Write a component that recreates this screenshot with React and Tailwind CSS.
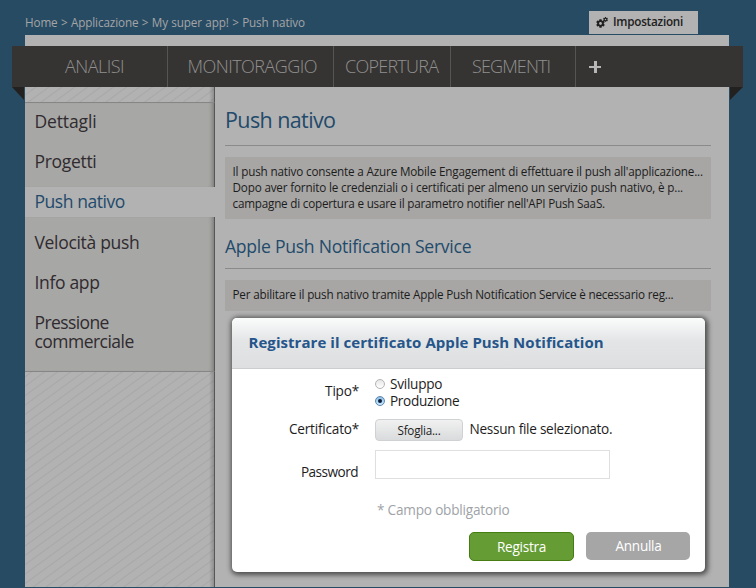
import { FaCog } from 'react-icons/fa';

const tabs = [
  { label: 'ANALISI', box: 'w-[156px] pl-[53px]', track: 'tracking-[-0.53px]' },
  { label: 'MONITORAGGIO', box: 'w-[166px] pl-[19.5px]', track: 'tracking-[-0.54px]' },
  { label: 'COPERTURA', box: 'w-[117px] pl-[11px]', track: 'tracking-[-0.75px]' },
  { label: 'SEGMENTI', box: 'w-[125px] pl-[21px]', track: 'tracking-[-0.87px]' },
];

function Note({ children, className }) {
  return (
    <div className={`bg-[#a7a6a4] pl-[7.5px] text-[11.7px] leading-4 text-[#1c1c1c] whitespace-nowrap ${className}`}>
      {children}
    </div>
  );
}

function Sidebar() {
  return (
    <aside className="relative w-[190px] h-[500px] border-r border-[#565656] bg-[#b2b2b2] bg-[repeating-linear-gradient(144deg,transparent_0px,transparent_5.4px,#a9a9a9_6.4px,#a9a9a9_6.6px,transparent_7.6px)]">
      <div className="absolute right-0 top-0 h-full w-[5px] bg-linear-to-r from-transparent to-black/20" />
      <nav className="relative mt-[15px] -mr-px text-[17.5px] leading-[19px] text-[#302b2f]">
        <div className="flex flex-col gap-[21px] h-[85px] pt-[9px] pl-[9.5px] border-t border-[#868686] border-r border-r-[#565656] bg-[#a7a7a5] shadow-[inset_-5px_0_5px_-4px_#00000055]">
          <span className="tracking-[-0.14px]">Dettagli</span>
          <span className="tracking-[-0.31px]">Progetti</span>
        </div>
        <div className="h-[30px] pt-[5px] pl-[9.5px] bg-[#b2b2b2] text-[#224a6b] tracking-[-0.45px]">Push nativo</div>
        <div className="flex flex-col gap-[21px] h-[155px] pt-[16px] pl-[9.5px] border-b border-[#868686] border-r border-r-[#565656] bg-[#a7a7a5] shadow-[inset_-5px_0_5px_-4px_#00000055]">
          <span className="tracking-[-0.32px]">Velocità push</span>
          <span className="tracking-[-0.33px]">Info app</span>
          <span>
            <span className="tracking-[-0.6px]">Pressione</span>
            <br />
            <span className="tracking-[-0.53px]">commerciale</span>
          </span>
        </div>
      </nav>
    </aside>
  );
}

function Radio({ checked }) {
  return (
    <span
      className={`mt-px flex size-[10px] items-center justify-center rounded-full border ${
        checked ? 'border-[#5f86ad] bg-linear-to-b from-[#8dbce6] to-[#c9ecff]' : 'border-[#b4b4b4] bg-linear-to-b from-[#e6e6e6] to-white'
      }`}
    >
      {checked && <span className="size-1 rounded-full bg-[#0b1e38]" />}
    </span>
  );
}

function Modal() {
  return (
    <div className="absolute left-[232px] top-[318px] w-[473px] h-[254px] rounded-[5px] bg-white shadow-[1px_1px_5px_2px_#00000090] text-[13.6px] text-[#1d1d1d] whitespace-nowrap">
      <h2 className="h-[51px] rounded-t-[5px] border-b border-[#cccdce] bg-linear-to-b from-[#fbfcfc] via-[#e3e5e6] via-45% to-[#dedfe1] pl-[16.5px] pt-[14px] text-[15px] leading-5 font-bold text-[#25558a] tracking-[0.05px]">
        Registrare il certificato Apple Push Notification
      </h2>
      <div className="flex h-[43px] pt-[6px]">
        <div className="w-[127px] pt-[7px] text-right leading-[18px] tracking-[-0.2px]">Tipo*</div>
        <div className="ml-4 flex flex-col">
          <label className="flex h-[17px] items-center gap-[5px] tracking-[-0.26px] leading-[17px]">
            <Radio />
            <span className="-mt-px">Sviluppo</span>
          </label>
          <label className="flex h-[17px] items-center gap-[5px] tracking-[-0.31px] leading-[17px]">
            <Radio checked />
            <span className="-mt-px">Produzione</span>
          </label>
        </div>
      </div>
      <div className="flex h-[38px] pt-[7px]">
        <div className="w-[127px] text-right leading-[20px] tracking-[-0.22px]">Certificato*</div>
        <button className="ml-4 h-[22px] w-[88px] rounded-[4px] border border-[#cfd1d2] bg-linear-to-b from-[#f1f1f1] to-[#d9dbdc] text-[11.7px] leading-[19px] tracking-[-0.23px]">
          Sfoglia...
        </button>
        <span className="ml-[6.5px] leading-[20px] tracking-[-0.27px]">Nessun file selezionato.</span>
      </div>
      <div className="flex h-[50px]">
        <div className="w-[126px] pt-[13px] text-right leading-[18px] tracking-[-0.52px]">Password</div>
        <div className="ml-[17px] h-[29px] w-[235px] border border-[#dfdfdf] bg-white" />
      </div>
      <div className="pl-[145px] leading-5 text-[#a0a3a7] tracking-[-0.2px]">* Campo obbligatorio</div>
      <div className="mt-[12px] flex gap-3 pl-[237px] text-white">
        <button className="h-[29px] w-[105px] rounded-[5px] border border-[#467d13] bg-[#659c33] leading-[26px] tracking-[-0.27px]">Registra</button>
        <button className="h-[28px] w-[104px] rounded-[5px] bg-[#a6a6a6] pl-px leading-[28px] tracking-[-0.27px]">Annulla</button>
      </div>
    </div>
  );
}

export default function App() {
  return (
    <div className="relative h-[588px] w-[756px] overflow-hidden bg-[#284b64] font-['Open_Sans','Noto_Sans',sans-serif]">
      <header className="flex h-[35px] pl-[25px] pt-[11px]">
        <div className="w-[564px] pt-[3px] text-[11.7px] leading-4 text-[#a3a5a6] tracking-[-0.12px] [word-spacing:0.5px]">
          Home &gt; Applicazione &gt; My super app! &gt; Push nativo
        </div>
        <div className="flex h-[23px] w-[109px] bg-[#b2b2b2] pl-[7px] text-[#202020]">
          <div className="relative w-[17px]">
            <FaCog className="absolute left-0 top-[8px] size-[9px]" />
            <FaCog className="absolute left-[7px] top-[6px] size-[5px]" />
          </div>
          <span className="pt-[2px] text-[11.7px] leading-4 font-semibold tracking-[-0.24px]">Impostazioni</span>
        </div>
      </header>
      <div className="ml-[25px] h-[11px] w-[704px] bg-[#b2b2b2]" />
      <nav className="ml-[12px] flex h-[41px] w-[731px] bg-[#363432] text-[18px] font-light leading-[41px] text-[#909090]">
        {tabs.map((t) => (
          <div key={t.label} className={`border-r border-[#575553] ${t.box} ${t.track}`}>
            {t.label}
          </div>
        ))}
        <div className="flex items-center pl-[13px]">
          <svg width="12" height="12" viewBox="0 0 12 12" fill="#b6b6b6">
            <path d="M5 0h3v5h4v2H8v5H5V7H0V5h5z" />
          </svg>
        </div>
      </nav>
      <div className="flex">
        <svg className="ml-[12px]" width="13" height="13" viewBox="0 0 13 13">
          <path d="M0 0h12v13z" fill="#23211f" />
        </svg>
        <div className="flex h-[500px] w-[704px] bg-[#b2b2b2]">
          <Sidebar />
          <main className="w-[496px] pl-[10px]">
            <h1 className="h-[59px] border-b border-[#8a8a8a] pt-[19px] text-[21.5px] leading-[28px] text-[#224a6b] tracking-[-0.6px]">Push nativo</h1>
            <Note className="mt-[11px] h-[62px] pt-[6px]">
              <div className="tracking-[-0.17px]">Il push nativo consente a Azure Mobile Engagement di effettuare il push all'applicazione...</div>
              <div className="tracking-[-0.17px]">Dopo aver fornito le credenziali o i certificati per almeno un servizio push nativo, è p...</div>
              <div className="tracking-[-0.21px]">campagne di copertura e usare il parametro notifier nell'API Push SaaS.</div>
            </Note>
            <h2 className="h-[50px] border-b border-[#8a8a8a] pt-[15px] text-[17.6px] leading-[25px] text-[#224a6b] tracking-[-0.27px]">Apple Push Notification Service</h2>
            <Note className="mt-[11px] h-[31px] pt-[6px] tracking-[-0.19px]">
              Per abilitare il push nativo tramite Apple Push Notification Service è necessario reg...
            </Note>
          </main>
        </div>
        <svg className="ml-px" width="13" height="13" viewBox="0 0 13 13">
          <path d="M0 0h13L0 13z" fill="#23211f" />
        </svg>
      </div>
      <Modal />
    </div>
  );
}
